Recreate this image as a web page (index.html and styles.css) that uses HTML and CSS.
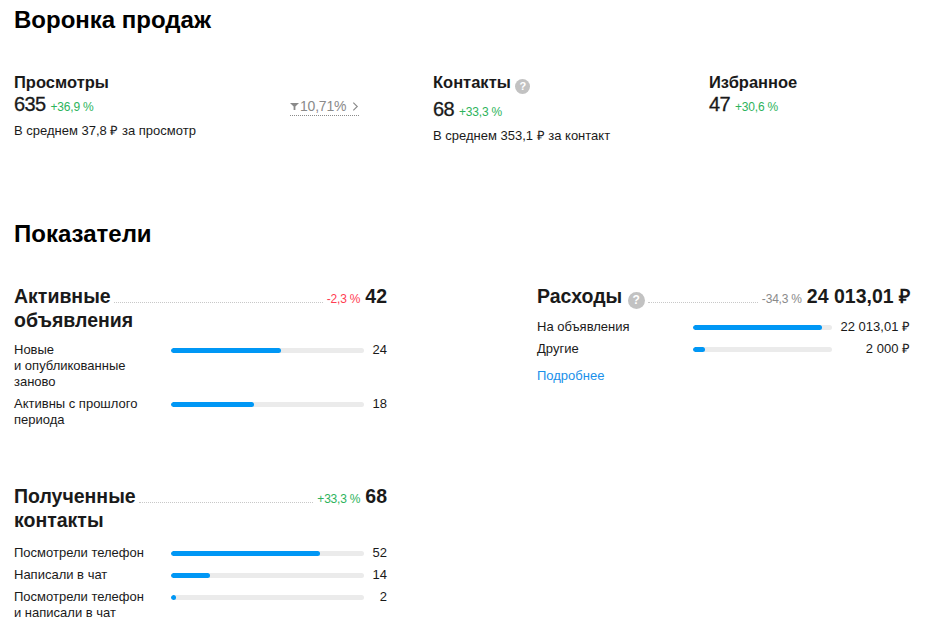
FILE: index.html
```html
<!DOCTYPE html>
<html lang="ru">
<head>
<meta charset="utf-8">
<title>Воронка продаж</title>
<link rel="stylesheet" href="styles.css">
</head>
<body>
<main class="page">
  <section class="funnel">
    <h1 class="section-title">Воронка продаж</h1>
    <div class="funnel-grid">
      <div class="funnel-item">
        <div class="funnel-label">Просмотры</div>
        <div class="funnel-value">635 <span class="delta green">+36,9&nbsp;%</span></div>
        <div class="funnel-caption">В среднем 37,8 ₽ за просмотр</div>
      </div>
      <div class="funnel-conv">
        <a class="conv-link" href="#">
          <svg class="conv-icon" viewBox="0 0 10 10" width="9" height="9"><path d="M0 1h10L6 5v4H4V5z" fill="#8a8a8a"/></svg><span class="conv-text">10,71%</span><svg class="conv-chev" viewBox="0 0 8 12" width="7" height="11"><path d="M1.5 1.5l4.5 4.5-4.5 4.5" fill="none" stroke="#8a8a8a" stroke-width="1.3"/></svg>
        </a>
      </div>
      <div class="funnel-item">
        <div class="funnel-label with-help">Контакты <span class="help">?</span></div>
        <div class="funnel-value">68 <span class="delta green">+33,3&nbsp;%</span></div>
        <div class="funnel-caption">В среднем 353,1 ₽ за контакт</div>
      </div>
      <div class="funnel-item">
        <div class="funnel-label">Избранное</div>
        <div class="funnel-value">47 <span class="delta green">+30,6&nbsp;%</span></div>
      </div>
    </div>
  </section>

  <section class="metrics">
    <h2 class="section-title">Показатели</h2>
    <div class="metrics-grid">
      <div class="metrics-col">
        <div class="kpi">
          <div class="kpi-head">
            <span class="kpi-title">Активные</span>
            <span class="leader"></span>
            <span class="delta red">-2,3&nbsp;%</span>
            <span class="kpi-value">42</span>
          </div>
          <div class="kpi-title-cont">объявления</div>
          <div class="rows">
            <div class="row">
              <div class="row-label">Новые<br>и опубликованные<br>заново</div>
              <div class="bar"><div class="bar-fill" style="width:57%"></div></div>
              <div class="row-value">24</div>
            </div>
            <div class="row">
              <div class="row-label">Активны с прошлого<br>периода</div>
              <div class="bar"><div class="bar-fill" style="width:43%"></div></div>
              <div class="row-value">18</div>
            </div>
          </div>
        </div>

        <div class="kpi kpi-second">
          <div class="kpi-head">
            <span class="kpi-title">Полученные</span>
            <span class="leader"></span>
            <span class="delta green">+33,3&nbsp;%</span>
            <span class="kpi-value">68</span>
          </div>
          <div class="kpi-title-cont">контакты</div>
          <div class="rows">
            <div class="row">
              <div class="row-label">Посмотрели телефон</div>
              <div class="bar"><div class="bar-fill" style="width:77%"></div></div>
              <div class="row-value">52</div>
            </div>
            <div class="row">
              <div class="row-label">Написали в чат</div>
              <div class="bar"><div class="bar-fill" style="width:20%"></div></div>
              <div class="row-value">14</div>
            </div>
            <div class="row">
              <div class="row-label">Посмотрели телефон<br>и написали в чат</div>
              <div class="bar"><div class="bar-fill" style="width:2.5%"></div></div>
              <div class="row-value">2</div>
            </div>
          </div>
        </div>
      </div>

      <div class="metrics-col">
        <div class="kpi">
          <div class="kpi-head">
            <span class="kpi-title">Расходы <span class="help help-lg">?</span></span>
            <span class="leader"></span>
            <span class="delta gray">-34,3&nbsp;%</span>
            <span class="kpi-value">24 013,01 ₽</span>
          </div>
          <div class="rows rows-money">
            <div class="row">
              <div class="row-label">На объявления</div>
              <div class="bar"><div class="bar-fill" style="width:93%"></div></div>
              <div class="row-value">22 013,01 ₽</div>
            </div>
            <div class="row">
              <div class="row-label">Другие</div>
              <div class="bar"><div class="bar-fill" style="width:8.5%"></div></div>
              <div class="row-value">2 000 ₽</div>
            </div>
          </div>
          <a class="more-link" href="#">Подробнее</a>
        </div>
      </div>
    </div>
  </section>
</main>
</body>
</html>
```

FILE: styles.css
```css
* { box-sizing: border-box; }

html, body {
  margin: 0;
  padding: 0;
  background: #ffffff;
}

body {
  font-family: "Liberation Sans", Arial, sans-serif;
  color: #1a1a1a;
  font-size: 13px;
}

.page {
  padding: 6px 26px 0 14px;
}

.section-title {
  margin: 0;
  font-size: 24px;
  line-height: 28px;
  font-weight: 700;
  color: #000;
}

/* Funnel */
.funnel-grid {
  display: grid;
  grid-template-columns: 276px 143px 276px 1fr;
  margin-top: 38px;
}

.funnel-label {
  font-size: 16.5px;
  line-height: 20px;
  font-weight: 700;
  color: #1a1a1a;
}

.funnel-label.with-help {
  margin-bottom: 3px;
}

.funnel-value {
  font-size: 20px;
  line-height: 24px;
  color: #1a1a1a;
  letter-spacing: -0.6px;
  -webkit-text-stroke: 0.3px #1a1a1a;
}

.funnel-value .delta {
  -webkit-text-stroke: 0;
  letter-spacing: -0.2px;
}

.funnel-caption {
  margin-top: 4px;
  font-size: 13px;
  line-height: 16px;
}

.delta {
  font-size: 12px;
  letter-spacing: -0.2px;
}

.green { color: #2db35c; }
.red { color: #ff3d52; }
.gray { color: #8a8a8a; }

.funnel-conv {
  padding-top: 26px;
  padding-left: 0;
}

.conv-link {
  display: inline-flex;
  align-items: center;
  gap: 1px;
  color: #8a8a8a;
  font-size: 14px;
  line-height: 16px;
  text-decoration: none;
  border-bottom: 1px dotted #8a8a8a;
  padding-bottom: 1px;
  letter-spacing: -0.2px;
}

.conv-chev { margin-left: 5px; }

.help {
  display: inline-block;
  width: 15px;
  height: 15px;
  border-radius: 50%;
  background: #c2c2c2;
  color: #fff;
  font-size: 11px;
  line-height: 15px;
  text-align: center;
  font-weight: 700;
  vertical-align: -2px;
}

.help-lg {
  width: 17px;
  height: 17px;
  line-height: 17px;
  font-size: 12px;
  vertical-align: -1px;
}

/* Metrics */
.metrics {
  margin-top: 76px;
}

.metrics-grid {
  display: grid;
  grid-template-columns: 373px 373px;
  column-gap: 150px;
  margin-top: 36px;
}

.kpi-second {
  margin-top: 56px;
}

.kpi-head {
  display: flex;
  align-items: baseline;
}

.kpi-title,
.kpi-title-cont {
  font-size: 19.5px;
  line-height: 24px;
  font-weight: 700;
  color: #1a1a1a;
}

.kpi-title { white-space: nowrap; }

.leader {
  flex: 1;
  height: 0;
  border-bottom: 1px dotted #c8c8c8;
  margin: 0 4px 0 3px;
}

.kpi-head .delta {
  margin-right: 5px;
}

.kpi-value {
  font-size: 19.5px;
  line-height: 24px;
  font-weight: 700;
  color: #1a1a1a;
  white-space: nowrap;
}

.rows {
  display: flex;
  flex-direction: column;
  gap: 6px;
  margin-top: 10px;
}

.kpi-second .rows {
  margin-top: 13px;
}

.row {
  display: grid;
  grid-template-columns: 157px 1fr 23px;
  align-items: start;
  font-size: 13px;
  line-height: 16px;
}

.rows-money .row {
  grid-template-columns: 156px 1fr 78px;
}

.bar {
  height: 5px;
  margin-top: 6px;
  background: #ebebeb;
  border-radius: 3px;
  overflow: hidden;
}

.bar-fill {
  height: 100%;
  background: #0097f5;
  border-radius: 3px;
}

.row-value {
  text-align: right;
  white-space: nowrap;
}

.more-link {
  display: inline-block;
  margin-top: 11px;
  font-size: 13px;
  line-height: 16px;
  color: #1a90ea;
  text-decoration: none;
}
```
